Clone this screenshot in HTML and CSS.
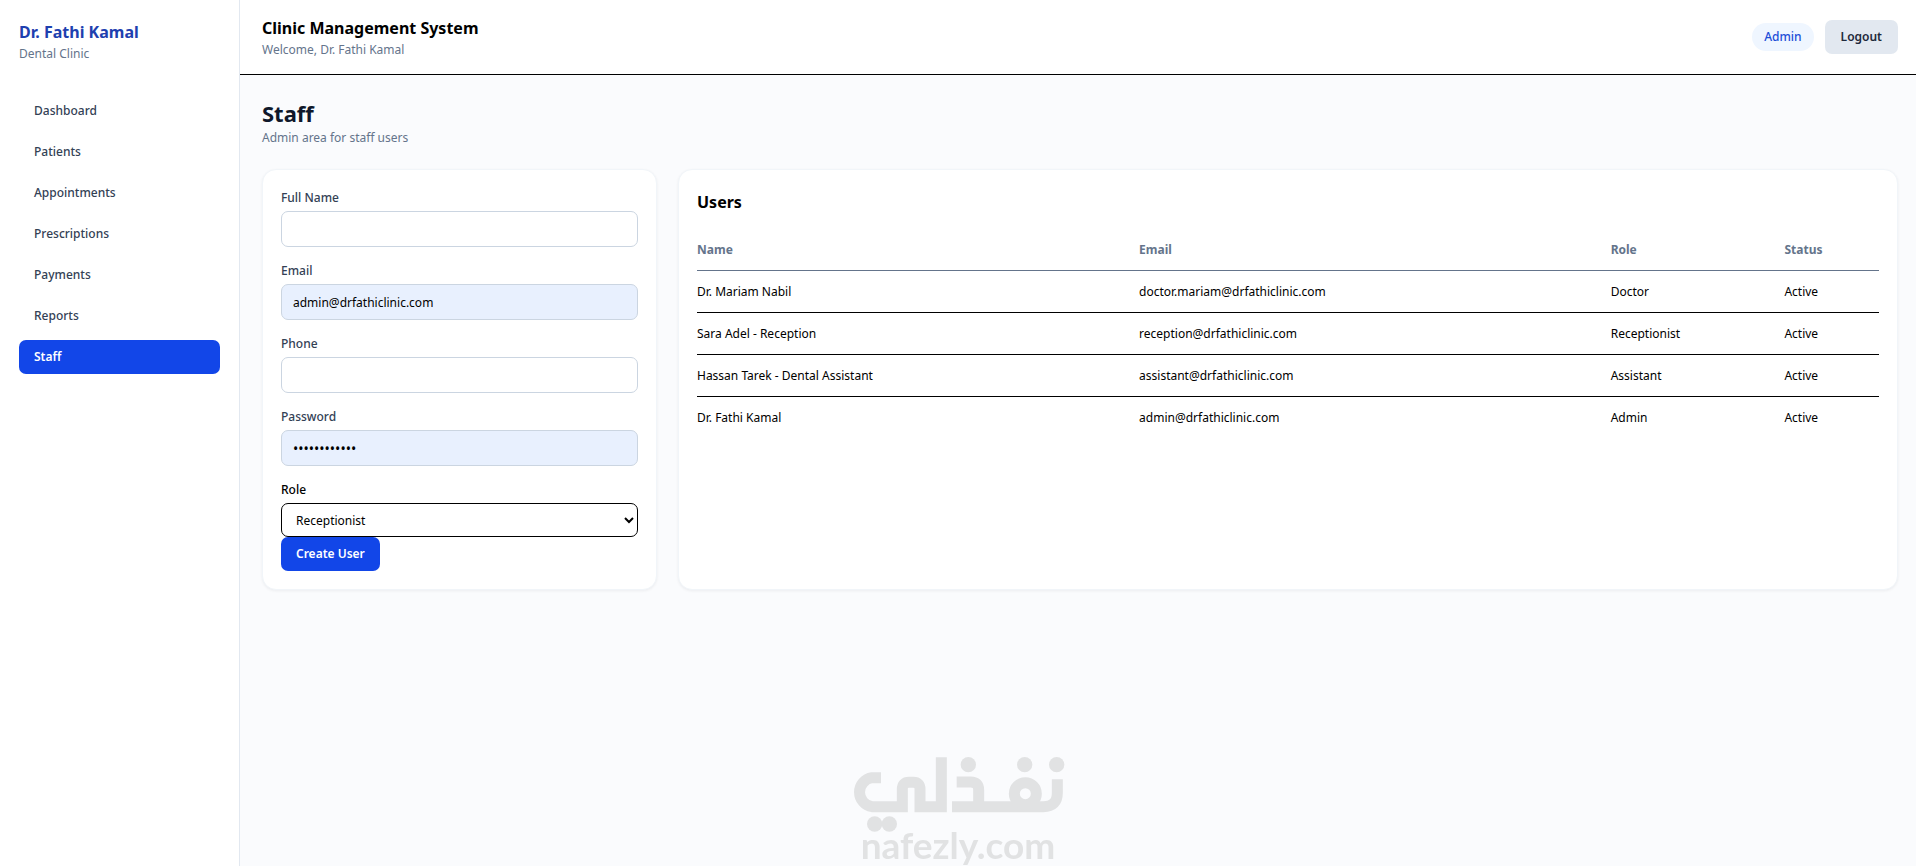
FILE: index.html
```html
<!DOCTYPE html>
<html lang="en">
<head>
    <meta charset="UTF-8">
    <meta name="viewport" content="width=device-width, initial-scale=1.0">
    <title>Staff - Clinic Management System</title>
    <link rel="stylesheet" href="styles.css">
</head>
<body>
    <div class="app">
        <aside class="sidebar">
            <div class="brand">
                <div class="brand-name">Dr. Fathi Kamal</div>
                <div class="brand-sub">Dental Clinic</div>
            </div>
            <nav class="nav">
                <a class="nav-link" href="#">Dashboard</a>
                <a class="nav-link" href="#">Patients</a>
                <a class="nav-link" href="#">Appointments</a>
                <a class="nav-link" href="#">Prescriptions</a>
                <a class="nav-link" href="#">Payments</a>
                <a class="nav-link" href="#">Reports</a>
                <a class="nav-link active" href="#">Staff</a>
            </nav>
        </aside>

        <div class="content">
            <header class="topbar">
                <div>
                    <div class="topbar-title">Clinic Management System</div>
                    <div class="topbar-sub">Welcome, Dr. Fathi Kamal</div>
                </div>
                <div class="topbar-actions">
                    <span class="badge">Admin</span>
                    <button class="btn btn-light" type="button">Logout</button>
                </div>
            </header>

            <main class="page">
                <h1>Staff</h1>
                <p class="page-sub">Admin area for staff users</p>

                <div class="grid">
                    <form class="card">
                        <div class="field">
                            <label for="name">Full Name</label>
                            <input class="input" id="name" type="text">
                        </div>
                        <div class="field">
                            <label for="email">Email</label>
                            <input class="input filled" id="email" type="email" value="admin@drfathiclinic.com">
                        </div>
                        <div class="field">
                            <label for="phone">Phone</label>
                            <input class="input" id="phone" type="text">
                        </div>
                        <div class="field">
                            <label for="password">Password</label>
                            <input class="input filled" id="password" type="password" value="clinic-admin">
                        </div>
                        <div class="field-role">
                            <label for="role">Role</label>
                            <select id="role">
                                <option>Receptionist</option>
                                <option>Doctor</option>
                                <option>Assistant</option>
                                <option>Admin</option>
                            </select>
                        </div>
                        <button class="btn btn-primary" type="button">Create User</button>
                    </form>

                    <section class="card">
                        <h2>Users</h2>
                        <table class="table">
                            <thead>
                                <tr>
                                    <th class="col-name">Name</th>
                                    <th class="col-email">Email</th>
                                    <th class="col-role">Role</th>
                                    <th>Status</th>
                                </tr>
                            </thead>
                            <tbody>
                                <tr>
                                    <td>Dr. Mariam Nabil</td>
                                    <td>doctor.mariam@drfathiclinic.com</td>
                                    <td>Doctor</td>
                                    <td>Active</td>
                                </tr>
                                <tr>
                                    <td>Sara Adel - Reception</td>
                                    <td>reception@drfathiclinic.com</td>
                                    <td>Receptionist</td>
                                    <td>Active</td>
                                </tr>
                                <tr>
                                    <td>Hassan Tarek - Dental Assistant</td>
                                    <td>assistant@drfathiclinic.com</td>
                                    <td>Assistant</td>
                                    <td>Active</td>
                                </tr>
                                <tr>
                                    <td>Dr. Fathi Kamal</td>
                                    <td>admin@drfathiclinic.com</td>
                                    <td>Admin</td>
                                    <td>Active</td>
                                </tr>
                            </tbody>
                        </table>
                    </section>
                </div>
            </main>
        </div>
    </div>

    <div class="watermark">
        <svg class="watermark-logo" viewBox="0 0 768 378" aria-hidden="true">
            <g fill="none" stroke="#e1e2e3" stroke-width="33">
                <path d="M153 113H126A44 44 0 0 0 126 200H217V148Q217 127 237 127H250Q270 127 270 148V200H334V52"/>
                <path d="M380 126H422Q446 126 446 150V200M366 200H640Q682 200 682 158V118"/>
                <circle cx="586" cy="161" r="33"/>
            </g>
            <g fill="#e1e2e3">
                <circle cx="415" cy="74" r="23"/>
                <circle cx="584" cy="74" r="23"/>
                <circle cx="680" cy="74" r="23"/>
                <circle cx="134" cy="252" r="23"/>
                <circle cx="178" cy="252" r="23"/>
            </g>
        </svg>
        <span class="watermark-text">nafezly.com</span>
    </div>
</body>
</html>
```
FILE: styles.css
```css
* {
    margin: 0;
    padding: 0;
    box-sizing: border-box;
}

body {
    font-family: "Segoe UI", "Noto Sans", sans-serif;
    font-size: 12px;
    line-height: 18px;
    color: #000;
    background: #fafbfd;
}

.app {
    display: flex;
    min-height: 100vh;
}

/* Sidebar */
.sidebar {
    width: 240px;
    flex-shrink: 0;
    padding: 20px 19px;
    background: #fff;
    border-right: 1px solid #e2e8f0;
}

.brand {
    margin-bottom: 31px;
}

.brand-name {
    font-size: 16px;
    line-height: 25px;
    font-weight: 700;
    color: #1e40af;
}

.brand-sub,
.topbar-sub,
.page-sub {
    color: #64748b;
}

.nav {
    display: flex;
    flex-direction: column;
    gap: 7px;
}

.nav-link {
    padding: 8px 15px;
    border-radius: 7px;
    font-weight: 500;
    color: #334155;
    text-decoration: none;
}

.nav-link.active {
    background: #1246e8;
    color: #fff;
    font-weight: 600;
}

/* Top bar */
.content {
    flex: 1;
    min-width: 0;
}

.topbar {
    display: flex;
    justify-content: space-between;
    align-items: center;
    padding: 16px 18px 15px 22px;
    background: #fff;
    border-bottom: 1px solid #000;
}

.topbar-title {
    font-size: 16px;
    line-height: 25px;
    font-weight: 700;
}

.topbar-actions {
    display: flex;
    align-items: center;
    gap: 11px;
    padding-bottom: 2px;
}

.badge {
    padding: 5px 12px;
    border-radius: 14px;
    background: #eff6ff;
    color: #1d4ed8;
    font-weight: 500;
}

.btn {
    padding: 8px 15px;
    border: none;
    border-radius: 7px;
    font-family: inherit;
    font-size: 12px;
    line-height: 18px;
    font-weight: 600;
    cursor: pointer;
}

.btn-light {
    padding: 8px 16px;
    background: #e2e8f0;
    color: #1e293b;
}

.btn-primary {
    background: #1246e8;
    color: #fff;
}

/* Page */
.page {
    padding: 22px 18px 22px 22px;
}

h1 {
    font-size: 22px;
    line-height: 32px;
    font-weight: 700;
    color: #0f172a;
}

.page-sub {
    margin-bottom: 22px;
}

.grid {
    display: grid;
    grid-template-columns: 395px 1fr;
    gap: 21px;
}

.card {
    padding: 19px 18px 18px;
    background: #fff;
    border: 1px solid #f1f5f9;
    border-radius: 14px;
    box-shadow: 0 1px 3px rgba(15, 23, 42, 0.06);
}

.field {
    margin-bottom: 15px;
}

label {
    display: block;
    margin-bottom: 4px;
    font-weight: 500;
    color: #334155;
}

.input,
select {
    display: block;
    width: 100%;
    height: 36px;
    padding: 0 11px;
    border: 1px solid #cbd5e1;
    border-radius: 7px;
    background: #fff;
    color: #000;
    font-family: inherit;
    font-size: 12px;
}

.input.filled {
    background: #e8f0fe;
}

.input[type="password"] {
    font-size: 14px;
}

.field-role label {
    color: #000;
}

select {
    height: 34px;
    padding: 0 10px;
    border-color: #000;
}

h2 {
    margin: 2px 0 16px;
    font-size: 16px;
    line-height: 22px;
    font-weight: 700;
}

.table {
    width: 100%;
    table-layout: fixed;
    border-collapse: collapse;
}

.table th,
.table td {
    padding: 12px 0;
    line-height: 17px;
    text-align: left;
    border-bottom: 1px solid #000;
}

.table th {
    color: #64748b;
    font-weight: 700;
    border-bottom-color: #64748b;
}

.table tr:last-child td {
    border-bottom: none;
}

.col-name {
    width: 37.4%;
}

.col-email {
    width: 39.9%;
}

.col-role {
    width: 14.7%;
}

/* Watermark */
.watermark {
    position: fixed;
    left: 50%;
    bottom: 0;
    width: 256px;
    height: 126px;
    margin-left: -128px;
    pointer-events: none;
}

.watermark-logo {
    display: block;
    width: 256px;
    height: 126px;
}

.watermark-text {
    position: absolute;
    left: 0;
    right: 0;
    bottom: 3px;
    text-align: center;
    font-family: Lato, sans-serif;
    font-size: 37px;
    line-height: 36px;
    font-weight: 700;
    color: #e1e2e3;
}
```
